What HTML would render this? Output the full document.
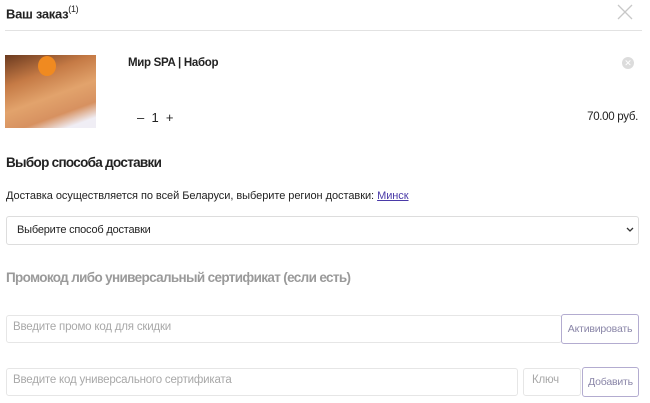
<!DOCTYPE html>
<html><head><meta charset="utf-8"><style>
*{margin:0;padding:0;box-sizing:border-box}
body{width:650px;height:403px;background:#fff;font-family:"Liberation Sans",sans-serif;color:#222;position:relative;overflow:hidden}
.a{position:absolute;white-space:nowrap}
.box{position:absolute;border:1px solid #e6e6e6;border-radius:3px;background:#fff}
.ph{color:#a8a8a8;font-size:11.5px;letter-spacing:-0.2px}
.btn{position:absolute;border:1px solid #b3acd0;border-radius:3px;color:#8a86a8;font-size:10.5px;text-align:center;letter-spacing:-0.2px}
</style></head><body>
<div class="a" style="left:6px;top:5px;font-size:13px;font-weight:bold;letter-spacing:-0.3px">Ваш заказ<sup style="font-size:9px;font-weight:normal;position:relative;top:-1px">(1)</sup></div>
<svg class="a" style="left:617px;top:4px" width="16" height="16"><path d="M1 1L15 15M15 1L1 15" stroke="#c8c8c8" stroke-width="1.3"/></svg>
<div class="a" style="left:5px;top:30px;width:637px;height:1px;background:#e2e2e2"></div>
<div class="a" style="left:5px;top:55px;width:91px;height:73px;background:linear-gradient(160deg,#6b3a1f 0%,#c57a45 30%,#e2a36c 55%,#d79160 75%,#f0eef5 90%)"></div>
<div class="a" style="left:38px;top:56px;width:18px;height:20px;border-radius:50%;background:#f08a20"></div>
<div class="a" style="left:128px;top:57px;font-size:11.5px;font-weight:bold;letter-spacing:-0.3px">Мир SPA | Набор</div>
<div class="a" style="left:622px;top:57px;width:12px;height:12px;border-radius:50%;background:#dcdcdc;color:#fff;font-size:9px;line-height:12px;text-align:center">✕</div>
<div class="a" style="left:137px;top:110px;font-size:13px">– &nbsp;1 &nbsp;+</div>
<div class="a" style="right:12px;top:111px;font-size:11.5px;letter-spacing:-0.3px">70.00 руб.</div>
<div class="a" style="left:6px;top:155px;font-size:13.5px;font-weight:bold;letter-spacing:-0.7px">Выбор способа доставки</div>
<div class="a" style="left:6px;top:190px;font-size:11px;letter-spacing:-0.05px">Доставка осуществляется по всей Беларуси, выберите регион доставки: <span style="color:#4a3aa8;text-decoration:underline">Минск</span></div>
<div class="box" style="left:6px;top:216px;width:633px;height:29px;border-color:#ddd"></div>
<div class="a" style="left:17px;top:224px;font-size:11px;letter-spacing:-0.2px">Выберите способ доставки</div>
<svg class="a" style="left:626px;top:227px" width="8" height="6"><path d="M1 1L4 4L7 1" stroke="#333" stroke-width="1.3" fill="none"/></svg>
<div class="a" style="left:6px;top:270px;font-size:13.5px;font-weight:bold;color:#9a9a9a;letter-spacing:-0.65px">Промокод либо универсальный сертификат (если есть)</div>
<div class="box" style="left:6px;top:315px;width:556px;height:28px"></div>
<div class="a ph" style="left:13px;top:321px">Введите промо код для скидки</div>
<div class="btn" style="left:561px;top:314px;width:78px;height:30px;line-height:28px">Активировать</div>
<div class="box" style="left:6px;top:368px;width:512px;height:28px"></div>
<div class="a ph" style="left:13px;top:374px">Введите код универсального сертификата</div>
<div class="box" style="left:523px;top:368px;width:58px;height:28px"></div>
<div class="a ph" style="left:532px;top:374px">Ключ</div>
<div class="btn" style="left:582px;top:367px;width:57px;height:30px;line-height:28px">Добавить</div>
</body></html>
